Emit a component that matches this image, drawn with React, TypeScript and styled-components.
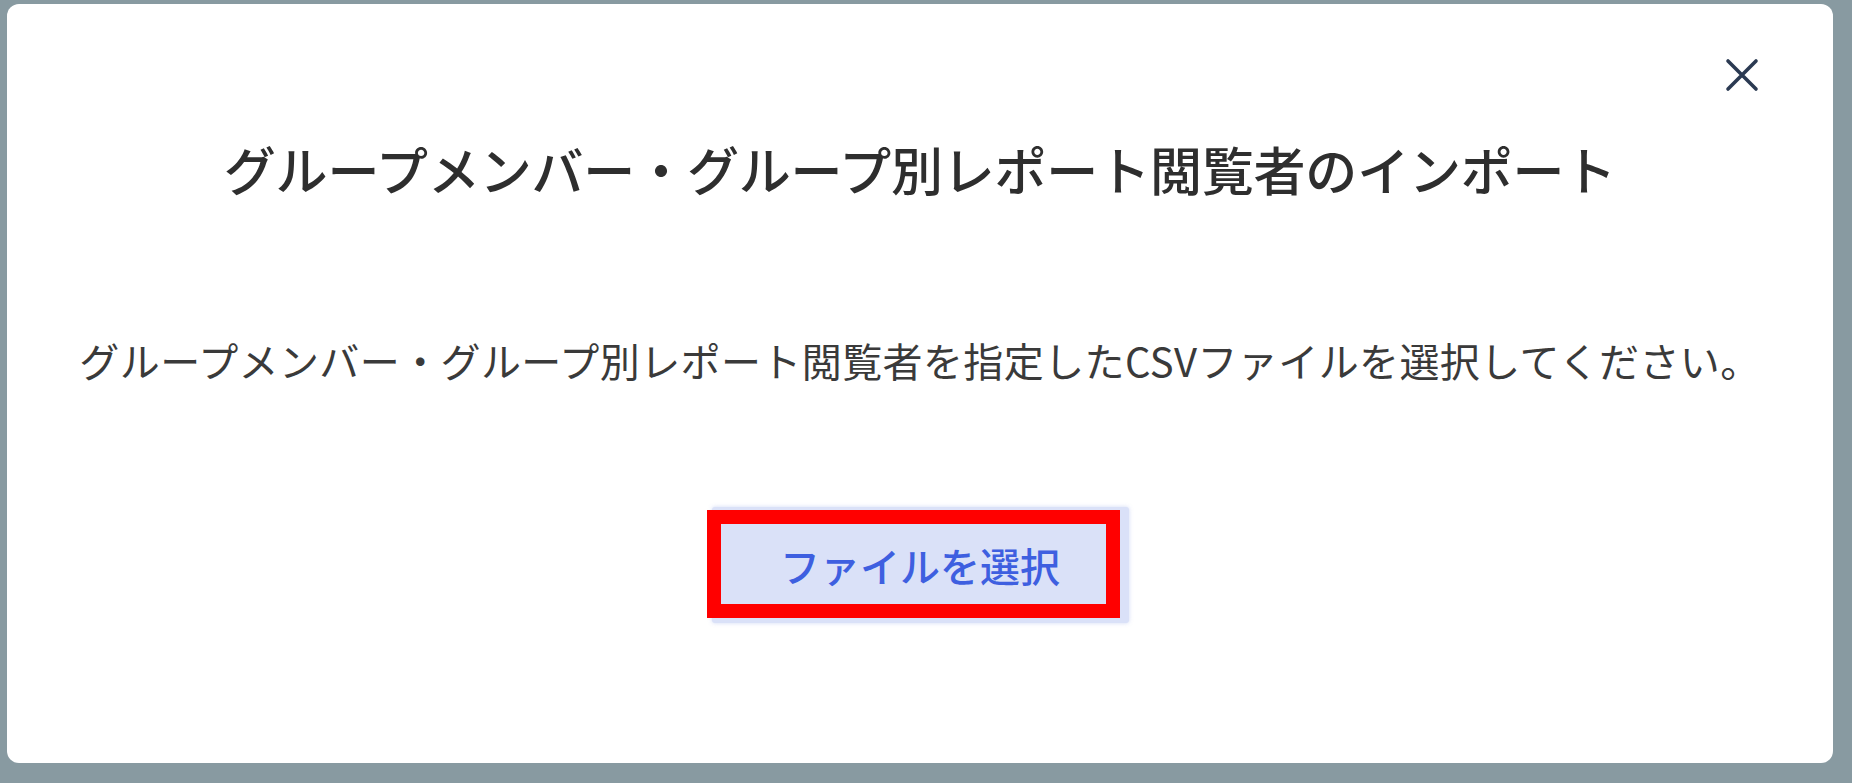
import React from 'react';
import styled, { createGlobalStyle } from 'styled-components';

const GlobalStyle = createGlobalStyle`
  html, body {
    margin: 0;
    padding: 0;
    background: #889aa1;
  }
  body {
    font-family: "Noto Sans CJK JP", "Noto Sans", sans-serif;
  }
`;

const Backdrop = styled.div`
  width: 1852px;
  height: 783px;
  box-sizing: border-box;
  padding: 4px 19px 20px 7px;
  background: #889aa1;
`;

const Modal = styled.div`
  position: relative;
  height: 100%;
  background: #ffffff;
  border-radius: 12px;
  display: flex;
  flex-direction: column;
  align-items: center;
  padding-top: 134px;
  box-sizing: border-box;
`;

const CloseButton = styled.button`
  position: absolute;
  top: 53px;
  right: 73px;
  width: 36px;
  height: 36px;
  padding: 0;
  border: none;
  background: transparent;
  display: flex;
  align-items: center;
  justify-content: center;
  cursor: pointer;
`;

const Title = styled.h2`
  margin: 0;
  font-size: 52px;
  line-height: 62px;
  font-weight: 500;
  color: #2e2e2e;
  letter-spacing: -0.2px;
`;

const Description = styled.p`
  margin: 132px 0 0;
  font-size: 40px;
  line-height: 56px;
  font-weight: 400;
  color: #3a3a3a;
  letter-spacing: 0.4px;
`;

const ButtonWrap = styled.div`
  position: relative;
  margin-top: 119px;
`;

const SelectButton = styled.button`
  width: 417px;
  height: 116px;
  border: none;
  border-radius: 3px;
  background: #dae1f8;
  box-shadow: 0 0 4px rgba(120, 145, 225, 0.35);
  color: #3e5fe0;
  font-family: "Noto Sans CJK JP", "Noto Sans", sans-serif;
  font-size: 40px;
  font-weight: 500;
  cursor: pointer;
`;

// annotation box drawn over the button in the screenshot
const Highlight = styled.span`
  position: absolute;
  left: -5px;
  top: 3px;
  width: 413px;
  height: 108px;
  box-sizing: border-box;
  border: 14px solid #ff0000;
  pointer-events: none;
`;

const App = () => {
  return (
    <>
      <GlobalStyle />
      <Backdrop>
        <Modal>
          <CloseButton aria-label="閉じる">
            <svg width="34" height="34" viewBox="0 0 34 34" fill="none">
              <path
                d="M3 3L31 31M31 3L3 31"
                stroke="#2b3a52"
                strokeWidth="3.6"
                strokeLinecap="round"
              />
            </svg>
          </CloseButton>
          <Title>グループメンバー・グループ別レポート閲覧者のインポート</Title>
          <Description>
            グループメンバー・グループ別レポート閲覧者を指定したCSVファイルを選択してください。
          </Description>
          <ButtonWrap>
            <SelectButton>ファイルを選択</SelectButton>
            <Highlight />
          </ButtonWrap>
        </Modal>
      </Backdrop>
    </>
  );
};

export default App;
